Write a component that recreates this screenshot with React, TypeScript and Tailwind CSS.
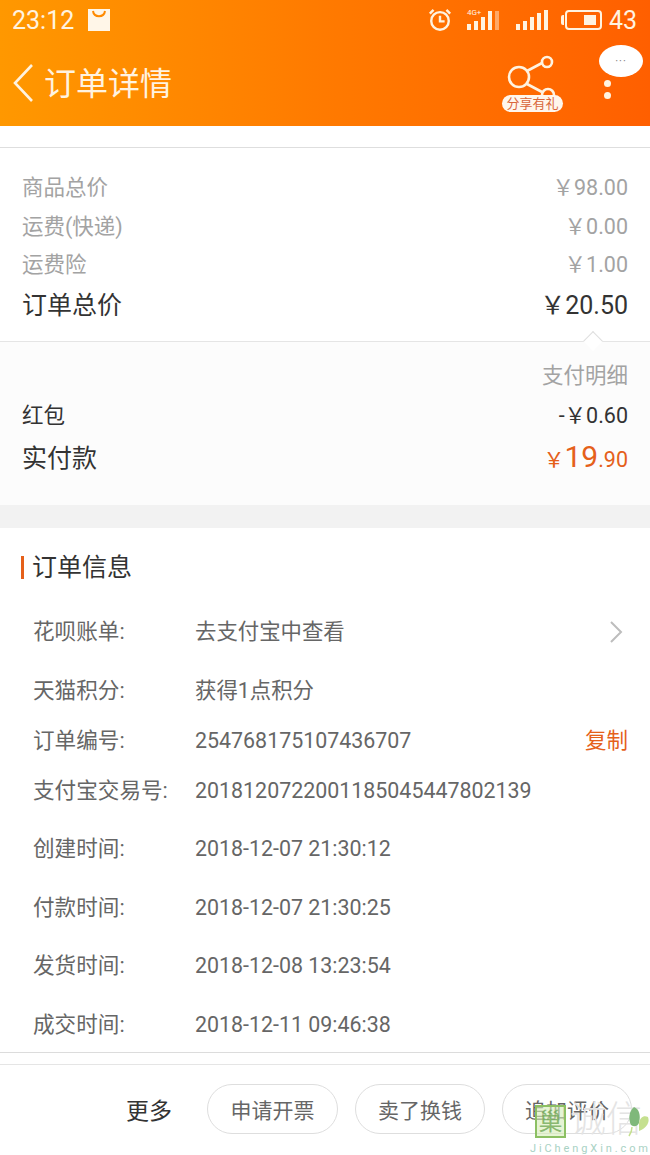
import React from "react";

const infoRows: { label: string; value: string; h: string; extra?: React.ReactNode }[] = [
  { label: "天猫积分:", value: "获得1点积分", h: "h-[50px]" },
  { label: "订单编号:", value: "254768175107436707", h: "h-[50px]", extra: <span className="ml-auto mr-[22px] text-[21.5px] text-[#e5601a]">复制</span> },
  { label: "支付宝交易号:", value: "2018120722001185045447802139", h: "h-[54px] pb-[4px]" },
  { label: "创建时间:", value: "2018-12-07 21:30:12", h: "h-[58.5px]" },
  { label: "付款时间:", value: "2018-12-07 21:30:25", h: "h-[58.5px]" },
  { label: "发货时间:", value: "2018-12-08 13:23:54", h: "h-[58.5px]" },
  { label: "成交时间:", value: "2018-12-11 09:46:38", h: "h-[58.5px]" },
];

function Signal({ bars }: { bars: number[] }) {
  return (
    <div className="flex items-end gap-[3px]">
      {bars.map((h, i) => (
        <div key={i} className="w-[4px] bg-[#fff3e0]" style={{ height: h }} />
      ))}
    </div>
  );
}

function SummaryRow({ label, value }: { label: string; value: string }) {
  return (
    <div className="flex h-[38.5px] items-center justify-between text-[21.5px] text-[#a3a3a3]">
      <span>{label}</span>
      <span>{value}</span>
    </div>
  );
}

export default function App() {
  return (
    <div
      className="relative h-[1155px] w-[650px] overflow-hidden bg-white text-[#444]"
      style={{ fontFamily: 'Roboto, "Noto Sans CJK SC", sans-serif' }}
    >
      {/* Header */}
      <header className="h-[126px] bg-gradient-to-r from-[#ff9800] via-[#ff7a00] to-[#ff5f00] text-[#fff3e0]">
        <div className="flex h-[40px] items-center pl-3 pr-[13px]">
          <span className="text-[25px] leading-none">23:12</span>
          <svg className="ml-[14px]" width="22" height="22" viewBox="0 0 22 22">
            <path d="M0 0h22v22H0z" fill="#fff6e8" />
            <path d="M5 2c1 7 11 7 12 0" fill="none" stroke="#ff8a00" strokeWidth="2" />
          </svg>
          <svg className="ml-auto" width="24" height="24" viewBox="0 0 26 26" fill="none" stroke="#fff3e0" strokeWidth="2.6">
            <circle cx="13" cy="14" r="9.5" />
            <path d="M13 8.5V14.5H18" />
            <path d="M2 6l4-4M24 6l-4-4" />
          </svg>
          <div className="relative ml-[15px] flex h-[20px] w-[33px] items-end">
            <span className="absolute left-0 top-[-1px] text-[8px] leading-none">4G+</span>
            <div className="flex items-end gap-[3px]">
              <div className="h-[6px] w-[4px] bg-[#fff3e0]" />
              <div className="h-[9px] w-[4px] bg-[#fff3e0]" />
              <div className="h-[13px] w-[4px] bg-[#fff3e0]" />
              <div className="h-[19px] w-[4px] bg-[#fff3e0]" />
              <div className="h-[19px] w-[4px] bg-[#ffa866]" />
            </div>
          </div>
          <div className="ml-[16px]">
            <Signal bars={[6, 9, 13, 17, 20]} />
          </div>
          <div className="relative ml-[17px] flex h-[20px] w-[37px] items-center justify-end rounded-[4px] border-2 border-[#fff3e0] pr-[4px]">
            <div className="h-[10px] w-[12px] bg-[#fff3e0]" />
            <div className="absolute -left-[6px] top-[3px] h-[10px] w-[3px] rounded-l-[2px] bg-[#fff3e0]" />
          </div>
          <span className="ml-[7px] text-[25px] leading-none">43</span>
        </div>
        <div className="relative flex h-[86px] items-center pl-[12px]">
          <svg width="22" height="40" viewBox="0 0 22 40" fill="none" stroke="#fff3e0" strokeWidth="2.6">
            <path d="M20 2L3 20l17 18" />
          </svg>
          <span className="ml-[10px] mt-[2px] text-[32px] leading-none">订单详情</span>
          <div className="absolute left-[502px] top-[14px] h-[58px] w-[62px]">
            <svg width="62" height="50" viewBox="0 0 62 50" fill="none" stroke="#fff3e0" strokeWidth="2.6">
              <circle cx="17" cy="23" r="10" />
              <circle cx="45" cy="8" r="5" />
              <circle cx="46" cy="41" r="6" />
              <path d="M25 17l15-8M25 30l15 8" />
            </svg>
            <span className="absolute left-0 top-[41px] flex h-[17px] w-[61px] items-center justify-center rounded-full bg-[#fff6ec] text-[13px] leading-none text-[#d9663a]">
              分享有礼
            </span>
          </div>
          <div className="absolute left-[599px] top-[5px] flex h-[32px] w-[44px] items-center justify-center rounded-[50%] bg-white text-[11px] leading-none tracking-[1px] text-[#777]">
            ···
          </div>
          <div className="absolute left-[604px] top-[40px] h-[7px] w-[7px] rounded-full bg-[#fff3e0]" />
          <div className="absolute left-[604px] top-[52px] h-[7px] w-[7px] rounded-full bg-[#fff3e0]" />
        </div>
      </header>

      <div className="h-[22px] border-b border-[#dedede] bg-white" />

      {/* Price summary */}
      <section className="relative h-[193px] px-[22px] pt-[21px]">
        <SummaryRow label="商品总价" value="￥98.00" />
        <SummaryRow label="运费(快递)" value="￥0.00" />
        <SummaryRow label="运费险" value="￥1.00" />
        <div className="flex h-[42px] items-center justify-between text-[25px] text-[#333]">
          <span>订单总价</span>
          <span>￥20.50</span>
        </div>
        <div className="absolute bottom-[-7px] right-[50px] z-10 h-[14px] w-[14px] rotate-45 border-l border-t border-[#dedede] bg-white" />
      </section>

      {/* Payment */}
      <section className="h-[164px] border-t border-[#e5e5e5] bg-[#fcfcfc] px-[22px]">
        <div className="flex h-[53px] items-end justify-end pb-[3px] text-[21.5px] text-[#a3a3a3]">支付明细</div>
        <div className="flex h-[39px] items-center justify-between pt-[4px] text-[21.5px] text-[#333]">
          <span>红包</span>
          <span>-￥0.60</span>
        </div>
        <div className="flex h-[47px] items-center justify-between pt-[3px] text-[25px] text-[#333]">
          <span>实付款</span>
          <span className="flex items-baseline text-[#e5601a]">
            <span className="text-[21px]">￥</span>
            <span className="text-[30px] leading-none">19</span>
            <span className="text-[21.5px]">.90</span>
          </span>
        </div>
      </section>

      <div className="h-[23px] bg-[#f2f2f2]" />

      {/* Order info */}
      <section className="h-[525px] border-b border-[#dcdcdc]">
        <div className="flex h-[78px] items-center pl-[21px]">
          <div className="h-[23px] w-[3px] bg-[#e5601a]" />
          <h2 className="ml-[8px] text-[25px] font-normal leading-none text-[#333]">订单信息</h2>
        </div>
        <div className="flex h-[52px] items-center text-[21.4px] text-[#666]">
          <span className="w-[195px] pl-[33px] text-[21.6px]">花呗账单:</span>
          <span>去支付宝中查看</span>
          <svg className="ml-auto mr-[27px]" width="14" height="24" viewBox="0 0 14 24" fill="none" stroke="#bdbdbd" strokeWidth="2">
            <path d="M2 2l10 10L2 22" />
          </svg>
        </div>
        <div className="mt-[8px]">
          {infoRows.map((r) => (
            <div key={r.label} className={`flex items-center text-[21.4px] text-[#666] ${r.h}`}>
              <span className="w-[195px] pl-[33px] text-[21.6px]">{r.label}</span>
              <span>{r.value}</span>
              {r.extra}
            </div>
          ))}
        </div>
      </section>

      {/* Footer actions */}
      <footer className="mt-[11px] flex h-[91px] items-start border-t border-[#e5e5e5] pt-[19px]">
        <span className="ml-[126px] flex h-[50px] w-[81px] items-center pt-[6px] text-[23px] text-[#333]">更多</span>
        <button className="mr-[17px] flex h-[50px] w-[131px] items-center justify-center rounded-full border border-[#dedede] pt-[6px] text-[21px] text-[#666]">
          申请开票
        </button>
        <button className="mr-[17px] flex h-[50px] w-[130px] items-center justify-center rounded-full border border-[#dedede] pt-[6px] text-[21px] text-[#666]">
          卖了换钱
        </button>
        <button className="flex h-[50px] w-[130px] items-center justify-center rounded-full border border-[#dedede] pt-[6px] text-[21px] text-[#666]">
          追加评价
        </button>
      </footer>

      {/* Watermark */}
      <div className="pointer-events-none absolute left-[535px] top-[1105px] h-[50px] w-[115px]">
        <div className="flex h-[33px] w-[31px] items-center justify-center border-2 border-[#8cc063] bg-[#d6ecb8]/60 text-[24px] leading-none text-[#6fa855]/80">
          巢
        </div>
        <span className="absolute left-[35px] top-[-3px] text-[36px] font-light leading-none text-[#e4e4e4]">诚信</span>
        <svg className="absolute left-[93px] top-[2px]" width="22" height="30" viewBox="0 0 22 30">
          <path d="M6 0c5 2 7 8 5 16-2 4-5 4-8 2C0 12 1 4 6 0z" fill="#7fb87a" />
          <path d="M11 16c1-6 5-8 9-6 2 5-1 11-9 14z" fill="#c5e08f" />
          <path d="M4 20c0 3-1 6-3 9" fill="none" stroke="#c5e08f" strokeWidth="1.5" />
        </svg>
        <span className="absolute left-[-5px] top-[38px] whitespace-nowrap text-[11px] leading-none tracking-[2.9px] text-[#a9d2c4]">JiChengXin.com</span>
      </div>
    </div>
  );
}
